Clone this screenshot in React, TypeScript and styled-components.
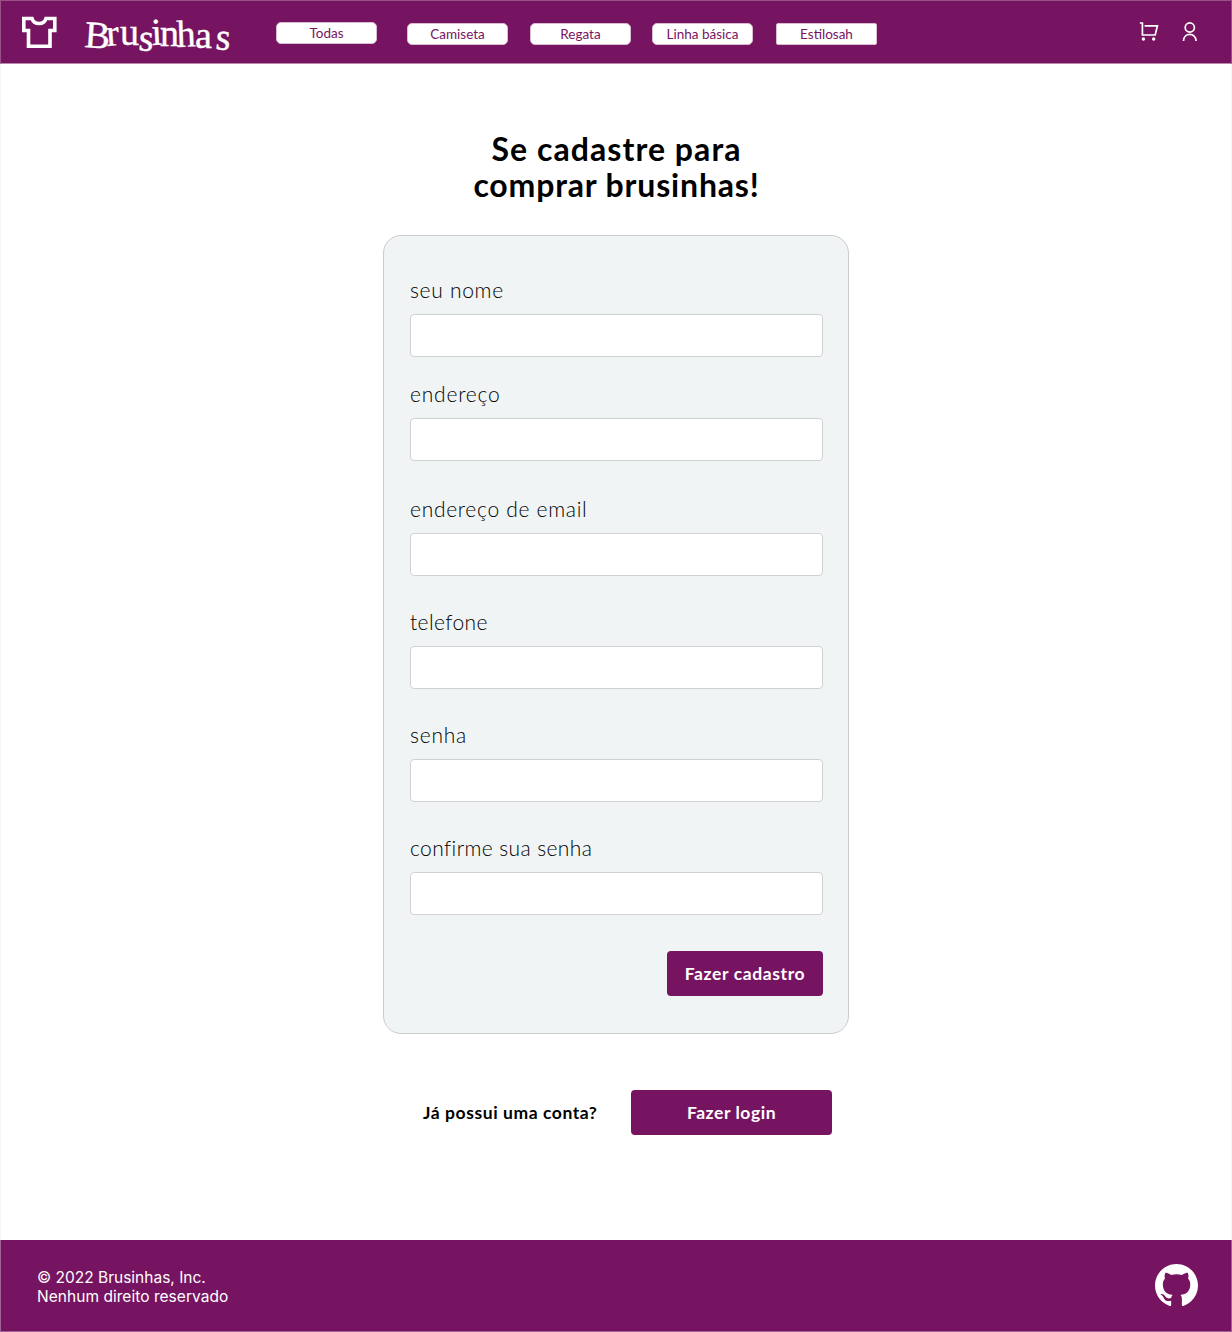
import React from "react";
import styled, { createGlobalStyle } from "styled-components";

const plum = "#771461";

const GlobalStyle = createGlobalStyle`
  *, *::before, *::after { box-sizing: border-box; }
  body { margin: 0; background: #fff; font-family: Lato, sans-serif; color: #000; }
`;

const Page = styled.div`
  display: flex;
  flex-direction: column;
  width: 1232px;
  height: 1332px;
  overflow: hidden;
`;

const Header = styled.header`
  display: flex;
  align-items: flex-start;
  flex: none;
  height: 64px;
  background: ${plum};
  border: 1px solid #9a5089;
  border-bottom-color: #b98aae;
`;

const ShirtIcon = styled.svg`
  flex: none;
  width: 36px;
  height: 34px;
  margin: 14px 0 0 20px;
`;

const Wordmark = styled.svg`
  flex: none;
  width: 150px;
  height: 50px;
  margin: 6px 0 0 26px;
  overflow: visible;
  font-family: "Liberation Serif", serif;
  fill: #fff;
  stroke: #fff;
  stroke-width: 0.4;
`;

const Nav = styled.nav`
  display: flex;
  align-items: flex-start;
  margin: 21px 0 0 43px;
`;

const NavButton = styled.button<{ $gap: number; $drop: number; $radius: number }>`
  display: flex;
  align-items: center;
  justify-content: center;
  width: 101px;
  height: 22px;
  padding: 0 0 1px;
  margin: ${(p) => p.$drop}px 0 0 ${(p) => p.$gap}px;
  border: 1px solid #d8bdd2;
  border-radius: ${(p) => p.$radius}px;
  background: #fff;
  color: ${plum};
  font: 400 13.5px/18px Lato, sans-serif;
  white-space: nowrap;
`;

const Actions = styled.div`
  display: flex;
  margin: 20px 33px 0 auto;
  gap: 23px;
`;

const ActionIcon = styled.svg<{ $w: number }>`
  width: ${(p) => p.$w}px;
  height: 21px;
  fill: none;
  stroke: #fff;
  stroke-width: 1.7;
`;

const Main = styled.main`
  display: flex;
  flex-direction: column;
  align-items: center;
  flex: 1;
  border: solid #f7f5f7;
  border-width: 0 1px;
`;

const Title = styled.h1`
  margin: 67px 0 0 1px;
  text-align: center;
  font-size: 32px;
  line-height: 36px;
  font-weight: 700;
`;

const TitleLine = styled.span<{ $ls: number }>`
  display: block;
  letter-spacing: ${(p) => p.$ls}px;
`;

const Card = styled.form`
  display: flex;
  flex-direction: column;
  width: 466px;
  height: 799px;
  margin: 32px 0 0;
  padding: 41px 25px 0 26px;
  border: 1px solid #c9cdcd;
  border-radius: 18px;
  background: #f0f4f5;
`;

const Field = styled.label<{ $after: number }>`
  display: flex;
  flex-direction: column;
  margin-bottom: ${(p) => p.$after}px;
`;

const Label = styled.span<{ $ls: number }>`
  height: 37px;
  font-size: 21px;
  line-height: 26px;
  font-weight: 300;
  letter-spacing: ${(p) => p.$ls}px;
  white-space: nowrap;
`;

const Input = styled.input`
  width: 413px;
  height: 43px;
  padding: 0 12px;
  border: 1px solid #d0d2d2;
  border-radius: 4px;
  background: #fff;
`;

const Button = styled.button<{ $w: number; $ls: number }>`
  width: ${(p) => p.$w}px;
  height: 45px;
  padding: 0;
  border: 0;
  border-radius: 4px;
  background: ${plum};
  color: #fff;
  font: 700 17.5px/46px Lato, sans-serif;
  letter-spacing: ${(p) => p.$ls}px;
`;

const SubmitRow = styled.div`
  display: flex;
  justify-content: flex-end;
`;

const LoginRow = styled.div`
  display: flex;
  align-items: center;
  justify-content: space-between;
  width: 409px;
  margin: 56px 0 0 23px;
`;

const Question = styled.span`
  font-size: 17.5px;
  font-weight: 700;
  letter-spacing: 0.57px;
`;

const Footer = styled.footer`
  display: flex;
  align-items: flex-start;
  justify-content: space-between;
  flex: none;
  height: 92px;
  padding: 28px 33px 0 36px;
  background: ${plum};
  border: 1px solid #a3639a;
  border-top: 0;
  color: #fff;
`;

const Legal = styled.p`
  margin: 0;
  font: 400 15.5px/19px Inter, sans-serif;
`;

const LegalLine = styled.span<{ $ls: number }>`
  display: block;
  letter-spacing: ${(p) => p.$ls}px;
`;

const GithubMark = styled.svg`
  width: 43px;
  height: 43px;
  margin-top: -4px;
  fill: #fff;
`;

const categories = [
  { name: "Todas", gap: 0, drop: 0, radius: 5 },
  { name: "Camiseta", gap: 30, drop: 1, radius: 5 },
  { name: "Regata", gap: 22, drop: 1, radius: 5 },
  { name: "Linha básica", gap: 21, drop: 1, radius: 5 },
  { name: "Estilosah", gap: 23, drop: 1, radius: 2 },
];

const fields = [
  { label: "seu nome", type: "text", after: 24, ls: 0.7 },
  { label: "endereço", type: "text", after: 35, ls: 0.8 },
  { label: "endereço de email", type: "email", after: 33, ls: 0.7 },
  { label: "telefone", type: "tel", after: 33, ls: 0.4 },
  { label: "senha", type: "password", after: 33, ls: 0.75 },
  { label: "confirme sua senha", type: "password", after: 36, ls: 0.4 },
];

export default function App() {
  return (
    <>
      <GlobalStyle />
      <Page>
        <Header>
          <ShirtIcon viewBox="0 0 36 34" fill="none" stroke="#fff" strokeWidth="3.6">
            <path d="M2.8 3.5H11C13 10.2 23 10.2 25 3.5H33.8V15.5H29V31.3H7.5V15.5H2.8Z" />
          </ShirtIcon>
          <Wordmark viewBox="0 0 150 50" role="img" aria-label="Brusinhas">
            <text
              fontSize="38"
              x="1 24 37 55 69 77 94 112 132"
              y="40 39 38 43 38 39 40 41 42"
              rotate="4 -4 0 5 -3 0 -2 0 5"
            >
              Brusinhas
            </text>
          </Wordmark>
          <Nav>
            {categories.map((c) => (
              <NavButton key={c.name} $gap={c.gap} $drop={c.drop} $radius={c.radius}>
                {c.name}
              </NavButton>
            ))}
          </Nav>
          <Actions>
            <ActionIcon $w={20} viewBox="0 0 20 21">
              <path d="M0.8 2H3.4V14H16.2L18.4 4.8H5.6" />
              <circle cx="4.4" cy="18" r="1.7" fill="#fff" stroke="none" />
              <circle cx="14.7" cy="18" r="1.7" fill="#fff" stroke="none" />
            </ActionIcon>
            <ActionIcon $w={16} viewBox="0 0 16 21">
              <circle cx="7.8" cy="6.5" r="4.6" />
              <path d="M1.5 20C1.5 11.2 14.1 11.2 14.1 20" />
            </ActionIcon>
          </Actions>
        </Header>
        <Main>
          <Title>
            <TitleLine $ls={1.05}>Se cadastre para</TitleLine>
            <TitleLine $ls={0.83}>comprar brusinhas!</TitleLine>
          </Title>
          <Card>
            {fields.map((f) => (
              <Field key={f.label} $after={f.after}>
                <Label $ls={f.ls}>{f.label}</Label>
                <Input type={f.type} />
              </Field>
            ))}
            <SubmitRow>
              <Button type="button" $w={156} $ls={0.62}>Fazer cadastro</Button>
            </SubmitRow>
          </Card>
          <LoginRow>
            <Question>Já possui uma conta?</Question>
            <Button type="button" $w={201} $ls={0.55}>Fazer login</Button>
          </LoginRow>
        </Main>
        <Footer>
          <Legal>
            <LegalLine $ls={0}>© 2022 Brusinhas, Inc.</LegalLine>
            <LegalLine $ls={0.04}>Nenhum direito reservado</LegalLine>
          </Legal>
          <GithubMark viewBox="0 0 16 16">
            <path d="M8 0C3.58 0 0 3.58 0 8c0 3.54 2.29 6.53 5.47 7.59.4.07.55-.17.55-.38 0-.19-.01-.82-.01-1.49-2.01.37-2.53-.49-2.69-.94-.09-.23-.48-.94-.82-1.13-.28-.15-.68-.52-.01-.53.63-.01 1.08.58 1.23.82.72 1.21 1.87.87 2.33.66.07-.52.28-.87.51-1.07-1.78-.2-3.64-.89-3.64-3.95 0-.87.31-1.59.82-2.15-.08-.2-.36-1.02.08-2.12 0 0 .67-.21 2.2.82.64-.18 1.32-.27 2-.27s1.36.09 2 .27c1.53-1.04 2.2-.82 2.2-.82.44 1.1.16 1.92.08 2.12.51.56.82 1.27.82 2.15 0 3.07-1.87 3.75-3.65 3.95.29.25.54.73.54 1.48 0 1.07-.01 1.93-.01 2.2 0 .21.15.46.55.38A8.01 8.01 0 0 0 16 8c0-4.42-3.58-8-8-8Z" />
          </GithubMark>
        </Footer>
      </Page>
    </>
  );
}
